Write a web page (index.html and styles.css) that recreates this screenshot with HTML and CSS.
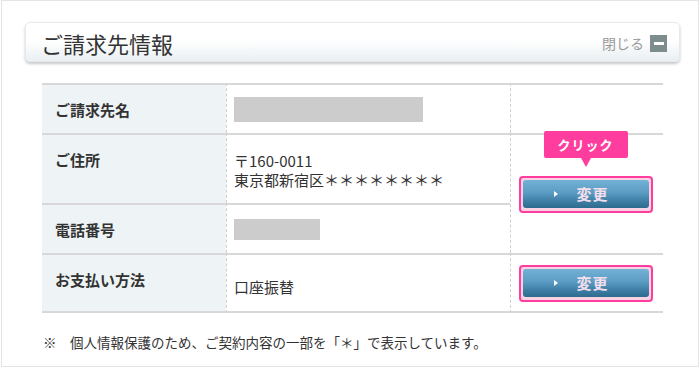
FILE: index.html
```html
<!DOCTYPE html>
<html lang="ja">
<head>
<meta charset="utf-8">
<link rel="stylesheet" href="styles.css">
</head>
<body>
<div class="frame">
  <div class="header">
    <h1 class="title">ご請求先情報</h1>
    <div class="close">閉じる<span class="close-icon"><span class="bar"></span></span></div>
  </div>
  <div class="content">
    <div class="grid">
      <div class="cell label r1">ご請求先名</div>
      <div class="cell value r1"><span class="mask mask-name"></span></div>
      <div class="cell action r1"></div>

      <div class="cell label r2">ご住所</div>
      <div class="cell value r2"><div class="addr">〒160-0011<br>東京都新宿区＊＊＊＊＊＊＊＊</div></div>
      <div class="cell action r23">
        <div class="btn-wrap">
          <div class="tip">クリック</div>
          <div class="btn"><span class="arrow"></span><span class="btn-text">変更</span></div>
        </div>
      </div>

      <div class="cell label r3">電話番号</div>
      <div class="cell value r3"><span class="mask mask-tel"></span></div>

      <div class="cell label r4 last">お支払い方法</div>
      <div class="cell value r4 last pay">口座振替</div>
      <div class="cell action r4 last">
        <div class="btn-wrap">
          <div class="btn"><span class="arrow"></span><span class="btn-text">変更</span></div>
        </div>
      </div>
    </div>
    <p class="note">※　個人情報保護のため、ご契約内容の一部を「＊」で表示しています。</p>
  </div>
</div>
</body>
</html>
```
FILE: styles.css
```css
* { box-sizing: border-box; }
html, body { margin: 0; padding: 0; background: #fff; }
body {
  font-family: "Noto Sans CJK JP", "Noto Sans", sans-serif;
  color: #333;
}
.frame {
  margin-left: 1px;
  width: 698px;
  height: 367px;
  border: 1px solid #e4e4e4;
  padding: 21px 0 0 23px;
}
.header {
  width: 655px;
  height: 40px;
  border: 1px solid #e6e9ea;
  border-radius: 5px;
  background: linear-gradient(#ffffff 0%, #ffffff 45%, #e9eff2 100%);
  box-shadow: 0 2px 3px rgba(0, 0, 0, 0.22);
  display: flex;
  align-items: center;
  justify-content: space-between;
  padding: 0 12px 0 15px;
}
.title {
  margin: 0;
  font-size: 22px;
  font-weight: normal;
  color: #333;
  line-height: 1;
  padding-top: 2px;
}
.close {
  display: flex;
  align-items: center;
  font-size: 14px;
  color: #9a9a9a;
  gap: 6px;
  padding-top: 2px;
}
.close-icon {
  width: 17px;
  height: 17px;
  background: #7d8c8d;
  display: flex;
  align-items: center;
  justify-content: center;
}
.close-icon .bar {
  width: 10px;
  height: 3px;
  background: #fff;
}
.content {
  padding: 21px 0 0 17px;
}
.grid {
  display: grid;
  width: 621px;
  grid-template-columns: 184px 284px 153px;
  grid-template-rows: 50px 70px 50px 60px;
}
.cell {
  border-top: 2px solid #d8d8d8;
}
.cell.last { border-bottom: 2px solid #d8d8d8; }
.label {
  background: #eef4f6;
  font-size: 15px;
  font-weight: bold;
  line-height: 18px;
  padding: 16px 0 0 13px;
  color: #333;
}
.value {
  border-left: 1px dashed #cfcfcf;
  display: flex;
  align-items: center;
  padding-left: 7px;
  font-size: 15px;
  line-height: 18px;
}
.value.pay { padding-top: 8px; }
.addr { padding-top: 1px; line-height: 19px; }
.action {
  border-left: 1px dashed #cfcfcf;
  display: flex;
  align-items: center;
  justify-content: center;
  padding-right: 3px;
}
.r23 { grid-row: 2 / span 2; grid-column: 3; }
.mask { display: block; background: #cccccc; }
.mask-name { width: 189px; height: 25px; }
.mask-tel { width: 86px; height: 21px; }
.btn-wrap {
  position: relative;
  border: 2px solid #ff3d9e;
  border-radius: 4px;
  background: #f9d2e4;
  padding: 2px 2px 3px 2px;
}
.btn {
  width: 126px;
  height: 28px;
  border-radius: 3px;
  background: linear-gradient(#74b2d6 0%, #5b9cc4 45%, #3f7fa6 75%, #2d6a8e 100%);
  display: flex;
  align-items: center;
  padding-left: 31px;
}
.arrow {
  width: 0;
  height: 0;
  border-left: 4px solid #fff;
  border-top: 3px solid transparent;
  border-bottom: 3px solid transparent;
}
.btn-text {
  margin-left: 19px;
  font-size: 15px;
  font-weight: bold;
  letter-spacing: 1px;
  color: #f3dfeb;
}
.tip {
  position: absolute;
  left: 23px;
  top: -47px;
  width: 84px;
  height: 27px;
  background: #ff3d9e;
  border-radius: 2px;
  color: #fff;
  font-size: 13px;
  font-weight: bold;
  letter-spacing: 1px;
  display: flex;
  align-items: center;
  justify-content: center;
  z-index: 2;
}
.tip::after {
  content: "";
  position: absolute;
  left: 37px;
  bottom: -9px;
  border-top: 9px solid #ff3d9e;
  border-left: 5px solid transparent;
  border-right: 5px solid transparent;
}
.note {
  margin: 20px 0 0 1px;
  font-size: 13.5px;
  line-height: 18px;
  color: #333;
}
```
